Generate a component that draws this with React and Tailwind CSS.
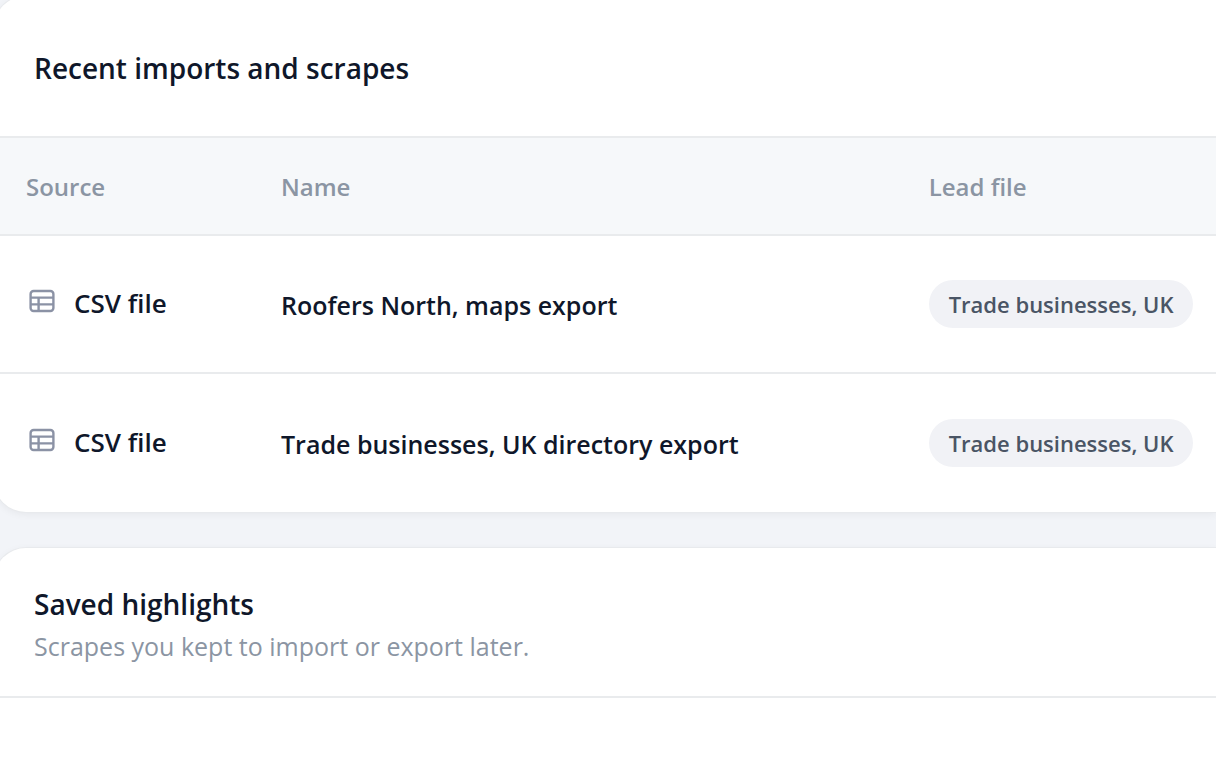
const imports = [
  { id: 1, source: 'CSV file', name: 'Roofers North, maps export', leadFile: 'Trade businesses, UK' },
  { id: 2, source: 'CSV file', name: 'Trade businesses, UK directory export', leadFile: 'Trade businesses, UK' },
];

function TableIcon() {
  return (
    <svg
      className="mb-1 size-7 shrink-0 text-[#8b92a5]"
      viewBox="0 0 28 28"
      fill="none"
      stroke="currentColor"
      strokeWidth="2.4"
      aria-hidden="true"
    >
      <rect x="2.6" y="4" width="22.8" height="20" rx="3" />
      <path d="M2.6 10.6h22.8M2.6 17.4h22.8M10.6 10.6V24" />
    </svg>
  );
}

function RecentImports() {
  return (
    <section className="overflow-hidden rounded-l-4xl bg-white pb-px shadow-[0_0_0_1px_#e8eaed,0_2px_8px_rgba(0,0,0,0.06)]">
      <div className="border-b-2 border-[#e9ebed] px-10 pt-12 pb-11">
        <h2 className="text-[28px] leading-12 font-semibold">Recent imports and scrapes</h2>
      </div>
      <table className="w-full table-fixed text-left">
        <thead className="bg-[#f6f8fa] text-[#8b95a3]">
          <tr className="h-[97px] border-b-2 border-[#e9ebed] text-[24px] leading-8">
            <th scope="col" className="w-[255px] px-8 pt-0.5 font-semibold">Source</th>
            <th scope="col" className="w-[53%] px-8 pt-0.5 font-semibold">Name</th>
            <th scope="col" className="px-8 pt-0.5 font-semibold">Lead file</th>
          </tr>
        </thead>
        <tbody>
          {imports.map((item) => (
            <tr key={item.id} className="h-[138px] border-b-2 border-[#e9ebed] leading-9 last:border-b-0">
              <td className="px-8 pb-0.5 text-[26px]">
                <div className="flex items-center gap-[18px] pl-0.5">
                  <TableIcon />
                  <span className="font-semibold">{item.source}</span>
                </div>
              </td>
              <td className="px-8 pt-0.5 text-[25px] font-semibold">{item.name}</td>
              <td className="pl-8 whitespace-nowrap">
                <span className="inline-flex h-12 items-center rounded-full bg-[#f1f2f6] px-5 text-[22px] font-semibold text-[#4a5565]">
                  {item.leadFile}
                </span>
              </td>
            </tr>
          ))}
        </tbody>
      </table>
    </section>
  );
}

function SavedHighlights() {
  return (
    <section className="flex-1 rounded-tl-4xl bg-white shadow-[0_0_0_1px_#e8eaed,0_2px_8px_rgba(0,0,0,0.06)]">
      <div className="border-b-2 border-[#e9ebed] px-10 py-8">
        <h2 className="text-[28px] leading-12 font-semibold">Saved highlights</h2>
        <p className="text-[25px] leading-9 text-[#8b95a3]">Scrapes you kept to import or export later.</p>
      </div>
    </section>
  );
}

export default function App() {
  return (
    <div className="h-screen overflow-hidden bg-[#f2f4f8] font-['Open_Sans',sans-serif] text-[#0f172a]">
      <main className="-mt-1 -ml-1.5 flex min-h-[102%] flex-col gap-9">
        <RecentImports />
        <SavedHighlights />
      </main>
    </div>
  );
}
